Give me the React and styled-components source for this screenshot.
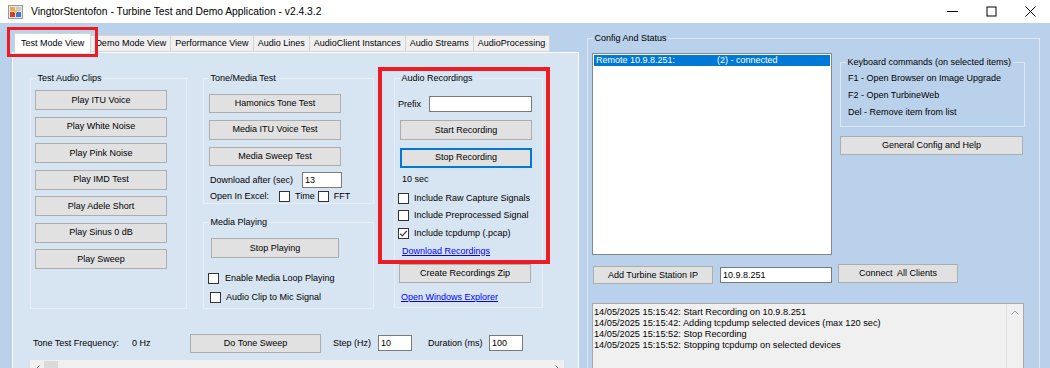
import React from "react";
import styled, { createGlobalStyle } from "styled-components";

const Global = createGlobalStyle`
  html, body { margin: 0; padding: 0; background: #fff; }
  body {
    font-family: "Liberation Sans", Arial, sans-serif;
    font-size: 9px;
    color: #000;
    overflow: hidden;
  }
  * { box-sizing: border-box; }
`;

const Window = styled.div`
  position: relative;
  width: 1050px;
  height: 368px;
  overflow: hidden;
  display: flex;
  flex-direction: column;
  background: #fff;
`;

const TitleBar = styled.div`
  height: 23px;
  flex-shrink: 0;
  display: flex;
  align-items: center;
  padding-left: 8px;
  background: #fff;
`;

const TitleText = styled.span`
  margin-left: 8px;
  font-size: 10.3px;
  line-height: 12px;
  white-space: nowrap;
`;

const WinControls = styled.div`
  margin-left: auto;
  display: flex;
  height: 23px;
`;

const WinBtn = styled.div`
  width: 39px;
  height: 23px;
  display: flex;
  align-items: center;
  justify-content: center;
`;

const Body = styled.div`
  flex: 1;
  display: flex;
  align-items: flex-start;
  background: #b9d1ea;
  padding: 10px 0 0 12px;
  overflow: hidden;
`;

const TabControl = styled.div`
  width: 567px;
  height: 360px;
  flex-shrink: 0;
  display: flex;
  flex-direction: column;
`;

const TabStrip = styled.div`
  height: 19px;
  display: flex;
  align-items: flex-end;
  padding-left: 2px;
`;

const Tab = styled.div`
  position: relative;
  z-index: ${(p) => (p.$active ? 1 : 0)};
  height: ${(p) => (p.$active ? 20 : 17)}px;
  margin-bottom: ${(p) => (p.$active ? -1 : 0)}px;
  margin-left: ${(p) => (p.$first ? 0 : -1)}px;
  padding: 0 ${(p) => (p.$active ? 6 : 4)}px;
  background: ${(p) => (p.$active ? "#ffffff" : "#f0f0f0")};
  border: 1px solid #d4d4d4;
  border-bottom: ${(p) => (p.$active ? "none" : "1px solid #d4d4d4")};
  line-height: ${(p) => (p.$active ? 18 : 15)}px;
  white-space: nowrap;
`;

const TabPage = styled.div`
  flex: 1;
  background: #d7e4f2;
  border: 1px solid #ffffff;
  padding: 20px 0 0 17px;
`;

const TopRow = styled.div`
  display: flex;
  align-items: flex-start;
`;

const Column = styled.div`
  display: flex;
  flex-direction: column;
  margin-left: ${(p) => p.$ml || 0}px;
`;

const Group = styled.fieldset`
  margin: ${(p) => p.$mt || 0}px 0 0 ${(p) => p.$ml || 0}px;
  padding: ${(p) => p.$pt || 0}px 0 0 0;
  width: ${(p) => p.$w}px;
  height: ${(p) => p.$h}px;
  border: 1px solid ${(p) => p.$line || "#e9eef5"};
  min-width: 0;
  flex-shrink: 0;
`;

const Legend = styled.legend`
  margin-left: 5px;
  padding: 0 1.5px;
  font-size: 9px;
  line-height: 11px;
  white-space: nowrap;
`;

const Inner = styled.div`
  display: flex;
  flex-direction: column;
  align-items: flex-start;
  padding-left: ${(p) => p.$pl || 0}px;
`;

const Stack = styled.div`
  display: flex;
  flex-direction: column;
  gap: ${(p) => p.$gap}px;
`;

const Btn = styled.button`
  width: ${(p) => p.$w}px;
  height: ${(p) => p.$h || 20}px;
  margin: ${(p) => p.$mt || 0}px 0 0 ${(p) => p.$ml || 0}px;
  padding: 0;
  flex-shrink: 0;
  background: #e1e1e1;
  border: ${(p) => (p.$focused ? "2px solid #0078d7" : "1px solid #adadad")};
  font-family: "Liberation Sans", Arial, sans-serif;
  font-size: 9px;
  line-height: 1;
  color: #000;
  white-space: pre;
`;

const Field = styled.input`
  width: ${(p) => p.$w}px;
  height: ${(p) => p.$h || 16}px;
  margin: ${(p) => p.$mt || 0}px 0 0 ${(p) => p.$ml || 0}px;
  padding: 0 2px;
  flex-shrink: 0;
  border: 1px solid #7a7a7a;
  background: #fff;
  font-family: "Liberation Sans", Arial, sans-serif;
  font-size: 9px;
  color: #000;
  outline: none;
`;

const FormRow = styled.div`
  display: flex;
  align-items: center;
  height: ${(p) => p.$h}px;
  margin: ${(p) => p.$mt || 0}px 0 0 ${(p) => p.$ml || 0}px;
`;

const Label = styled.span`
  display: inline-block;
  width: ${(p) => (p.$w ? `${p.$w}px` : "auto")};
  margin: ${(p) => p.$mt || 0}px 0 0 ${(p) => p.$ml || 0}px;
  flex-shrink: 0;
  line-height: 11px;
  white-space: pre;
`;

const BoxEl = styled.span`
  display: inline-flex;
  align-items: center;
  justify-content: center;
  width: 11px;
  height: 11px;
  margin-left: ${(p) => p.$ml || 0}px;
  flex-shrink: 0;
  border: 1px solid #333;
  background: #fff;
`;

const CheckLine = styled.div`
  display: flex;
  align-items: center;
  height: 13px;
  gap: ${(p) => p.$gap}px;
  margin: ${(p) => p.$mt || 0}px 0 0 ${(p) => p.$ml || 0}px;
  white-space: nowrap;
  line-height: 11px;
`;

const Link = styled.span`
  display: block;
  margin: ${(p) => p.$mt || 0}px 0 0 ${(p) => p.$ml || 0}px;
  color: #0000ff;
  text-decoration: underline;
  line-height: 11px;
  white-space: nowrap;
`;

const BottomRow = styled.div`
  display: flex;
  align-items: center;
  height: 20px;
  margin: 24px 0 0 3px;
`;

const HScroll = styled.div`
  width: 534px;
  height: 17px;
  margin-top: 7px;
  background: #f0f0f0;
  display: flex;
  align-items: center;
`;

const ScrollArrow = styled.div`
  width: 14px;
  height: 17px;
  display: flex;
  align-items: center;
  justify-content: center;
  margin-left: ${(p) => (p.$end ? "auto" : "0")};
`;

const HThumb = styled.div`
  width: 14px;
  height: 15px;
  background: #dadada;
`;

const ConfigGroup = styled(Group)`
  margin-left: 8px;
`;

const TopArea = styled.div`
  display: flex;
  align-items: flex-start;
`;

const ListBox = styled.div`
  width: 240px;
  height: 202px;
  background: #fff;
  border: 1px solid #828790;
  padding: 1px 1px 0;
`;

const ListItem = styled.div`
  display: flex;
  height: 11px;
  line-height: 11px;
  padding-left: 2px;
  background: ${(p) => (p.$selected ? "#0078d7" : "transparent")};
  color: ${(p) => (p.$selected ? "#fff" : "#000")};
  white-space: nowrap;
`;

const Cell = styled.span`
  width: ${(p) => (p.$w ? `${p.$w}px` : "auto")};
  flex-shrink: 0;
`;

const KeyLines = styled.div`
  display: flex;
  flex-direction: column;
  gap: 6px;
  line-height: 11px;
  white-space: nowrap;
`;

const ActionRow = styled.div`
  display: flex;
  align-items: flex-start;
  margin-top: 9px;
`;

const LogBox = styled.div`
  width: 432px;
  height: 100px;
  margin-top: 19px;
  border: 1px solid #a9a9a9;
  background: #f0f0f0;
  display: flex;
`;

const LogText = styled.div`
  flex: 1;
  padding: 3px 0 0 1px;
  font-size: 9.2px;
  line-height: 11px;
  white-space: nowrap;
`;

const VScroll = styled.div`
  width: 17px;
  border-left: 1px solid #e4e4e4;
  display: flex;
  flex-direction: column;
  align-items: center;
  padding-top: 6px;
`;

const Highlight = styled.div`
  position: absolute;
  left: ${(p) => p.$x}px;
  top: ${(p) => p.$y}px;
  width: ${(p) => p.$w}px;
  height: ${(p) => p.$h}px;
  border: ${(p) => p.$bw}px solid #ec1c24;
  pointer-events: none;
  z-index: 5;
`;

const AppIcon = () => (
  <svg width="15" height="14" viewBox="0 0 15 14">
    <rect x="0.5" y="0.5" width="14" height="13" fill="#e8e8e8" stroke="#9a9a9a" />
    <rect x="2" y="2" width="5" height="4" fill="#f2a65a" />
    <rect x="8" y="2" width="5" height="4" fill="#c9c9c9" />
    <rect x="2" y="7" width="5" height="5" fill="#d93a2b" />
    <rect x="8" y="7" width="5" height="5" fill="#2f7ad6" />
    <rect x="6" y="5" width="3" height="3" fill="#f4c430" />
  </svg>
);

const Check = ({ checked, ml }) => (
  <BoxEl $ml={ml}>
    {checked && (
      <svg width="9" height="9" viewBox="0 0 9 9">
        <path d="M1.2 4.6 L3.4 6.9 L7.8 1.8" fill="none" stroke="#333" strokeWidth="1.2" />
      </svg>
    )}
  </BoxEl>
);

const tabs = [
  "Test Mode View",
  "Demo Mode View",
  "Performance View",
  "Audio Lines",
  "AudioClient Instances",
  "Audio Streams",
  "AudioProcessing",
];

const clips = [
  "Play ITU Voice",
  "Play White Noise",
  "Play Pink Noise",
  "Play IMD Test",
  "Play Adele Short",
  "Play Sinus 0 dB",
  "Play Sweep",
];

const logLines = [
  "14/05/2025 15:15:42: Start Recording on 10.9.8.251",
  "14/05/2025 15:15:42: Adding tcpdump selected devices (max 120 sec)",
  "14/05/2025 15:15:52: Stop Recording",
  "14/05/2025 15:15:52: Stopping tcpdump on selected devices",
];

export default function App() {
  return (
    <Window>
      <Global />
      <TitleBar>
        <AppIcon />
        <TitleText>VingtorStentofon - Turbine Test and Demo Application - v2.4.3.2</TitleText>
        <WinControls>
          <WinBtn>
            <svg width="11" height="11" viewBox="0 0 11 11">
              <line x1="0" y1="5.5" x2="11" y2="5.5" stroke="#000" strokeWidth="1" />
            </svg>
          </WinBtn>
          <WinBtn>
            <svg width="11" height="11" viewBox="0 0 11 11">
              <rect x="1" y="1" width="9" height="9" fill="none" stroke="#000" strokeWidth="1" />
            </svg>
          </WinBtn>
          <WinBtn>
            <svg width="11" height="11" viewBox="0 0 11 11">
              <path d="M0.5 0.5 L10.5 10.5 M10.5 0.5 L0.5 10.5" stroke="#000" strokeWidth="1" />
            </svg>
          </WinBtn>
        </WinControls>
      </TitleBar>

      <Body>
        <TabControl>
          <TabStrip>
            {tabs.map((t, i) => (
              <Tab key={t} $active={i === 0} $first={i === 0}>
                {t}
              </Tab>
            ))}
          </TabStrip>
          <TabPage>
            <TopRow>
              <Group $w={157} $h={236} $pt={6}>
                <Legend>Test Audio Clips</Legend>
                <Inner $pl={4}>
                  <Stack $gap={6.5}>
                    {clips.map((c) => (
                      <Btn key={c} $w={132} $h={20}>
                        {c}
                      </Btn>
                    ))}
                  </Stack>
                </Inner>
              </Group>

              <Column $ml={16}>
                <Group $w={171} $h={131} $pt={9.5}>
                  <Legend>Tone/Media Test</Legend>
                  <Inner $pl={5}>
                    <Stack $gap={7}>
                      <Btn $w={132} $h={19.5}>Hamonics Tone Test</Btn>
                      <Btn $w={132} $h={19.5}>Media ITU Voice Test</Btn>
                      <Btn $w={132} $h={19.5}>Media Sweep Test</Btn>
                    </Stack>
                    <FormRow $h={16} $mt={6}>
                      <Label $w={92} $ml={1}>Download after (sec)</Label>
                      <Field $w={40} readOnly defaultValue="13" />
                    </FormRow>
                    <FormRow $h={13} $mt={2}>
                      <Label $w={69} $ml={1}>Open In Excel:</Label>
                      <Check />
                      <Label $ml={5}>Time</Label>
                      <Check ml={3} />
                      <Label $ml={5}>FFT</Label>
                    </FormRow>
                  </Inner>
                </Group>
                <Group $w={171} $h={92.5} $pt={10.5} $mt={12.5}>
                  <Legend>Media Playing</Legend>
                  <Inner $pl={7}>
                    <Btn $w={128} $h={20}>Stop Playing</Btn>
                    <CheckLine $mt={13.5} $ml={-3} $gap={6}>
                      <Check />
                      <span>Enable Media Loop Playing</span>
                    </CheckLine>
                    <CheckLine $mt={6} $ml={-1} $gap={5}>
                      <Check />
                      <span>Audio Clip to Mic Signal</span>
                    </CheckLine>
                  </Inner>
                </Group>
              </Column>

              <Group $w={149} $h={235} $pt={12} $ml={20}>
                <Legend>Audio Recordings</Legend>
                <Inner $pl={3}>
                  <FormRow $h={16}>
                    <Label $w={31}>Prefix</Label>
                    <Field $w={103} readOnly defaultValue="" />
                  </FormRow>
                  <Btn $w={132} $h={20} $mt={8} $ml={2}>Start Recording</Btn>
                  <Btn $w={132} $h={19.5} $mt={8} $ml={2} $focused>
                    Stop Recording
                  </Btn>
                  <Label $mt={6} $ml={4}>10 sec</Label>
                  <CheckLine $mt={7} $gap={5}>
                    <Check />
                    <span>Include Raw Capture Signals</span>
                  </CheckLine>
                  <CheckLine $mt={4} $gap={5}>
                    <Check />
                    <span>Include Preprocessed Signal</span>
                  </CheckLine>
                  <CheckLine $mt={5} $gap={5}>
                    <Check checked />
                    <span>Include tcpdump (.pcap)</span>
                  </CheckLine>
                  <Link $mt={6} $ml={4}>Download Recordings</Link>
                  <Btn $w={132} $h={19} $mt={7.5} $ml={1}>Create Recordings Zip</Btn>
                  <Link $mt={8.5} $ml={3}>Open Windows Explorer</Link>
                </Inner>
              </Group>
            </TopRow>

            <BottomRow>
              <Label $w={99}>Tone Test Frequency:</Label>
              <Label $w={58}>0 Hz</Label>
              <Btn $w={131} $h={19}>Do Tone Sweep</Btn>
              <Label $w={45} $ml={12}>Step (Hz)</Label>
              <Field $w={34} readOnly defaultValue="10" />
              <Label $w={61} $ml={16}>Duration (ms)</Label>
              <Field $w={34} readOnly defaultValue="100" />
            </BottomRow>

            <HScroll>
              <ScrollArrow>
                <svg width="5" height="8" viewBox="0 0 5 8">
                  <path d="M4.5 0.5 L1 4 L4.5 7.5" fill="none" stroke="#606060" strokeWidth="1" />
                </svg>
              </ScrollArrow>
              <HThumb />
              <ScrollArrow $end>
                <svg width="5" height="8" viewBox="0 0 5 8">
                  <path d="M0.5 0.5 L4 4 L0.5 7.5" fill="none" stroke="#606060" strokeWidth="1" />
                </svg>
              </ScrollArrow>
            </HScroll>
          </TabPage>
        </TabControl>

        <ConfigGroup $w={453} $h={360} $pt={9} $line="#dfe7f1">
          <Legend>Config And Status</Legend>
          <Inner $pl={4}>
            <TopArea>
              <ListBox>
                <ListItem $selected>
                  <Cell $w={121}>Remote 10.9.8.251:</Cell>
                  <Cell>(2) - connected</Cell>
                </ListItem>
              </ListBox>
              <Column $ml={8}>
                <Group $w={185} $h={70.5} $pt={5} $mt={3.5} $line="#dfe7f1">
                  <Legend>Keyboard commands (on selected items)</Legend>
                  <Inner $pl={7}>
                    <KeyLines>
                      <span>F1 - Open Browser on Image Upgrade</span>
                      <span>F2 - Open TurbineWeb</span>
                      <span>Del - Remove item from list</span>
                    </KeyLines>
                  </Inner>
                </Group>
                <Btn $w={183} $h={19} $mt={9}>General Config and Help</Btn>
              </Column>
            </TopArea>

            <ActionRow>
              <Btn $w={120} $h={18} $mt={2} $ml={1}>Add Turbine Station IP</Btn>
              <Field $w={112} $h={16} $mt={3} $ml={7} readOnly defaultValue="10.9.8.251" />
              <Btn $w={120} $h={19} $ml={6}>{"Connect  All Clients"}</Btn>
            </ActionRow>

            <LogBox>
              <LogText>
                {logLines.map((l) => (
                  <div key={l}>{l}</div>
                ))}
              </LogText>
              <VScroll>
                <svg width="8" height="5" viewBox="0 0 8 5">
                  <path d="M0.5 4.5 L4 1 L7.5 4.5" fill="none" stroke="#a0a0a0" strokeWidth="1" />
                </svg>
              </VScroll>
            </LogBox>
          </Inner>
        </ConfigGroup>
      </Body>

      <Highlight $x={7} $y={27} $w={91} $h={30} $bw={3} />
      <Highlight $x={378} $y={67} $w={172} $h={197} $bw={4} />
    </Window>
  );
}
